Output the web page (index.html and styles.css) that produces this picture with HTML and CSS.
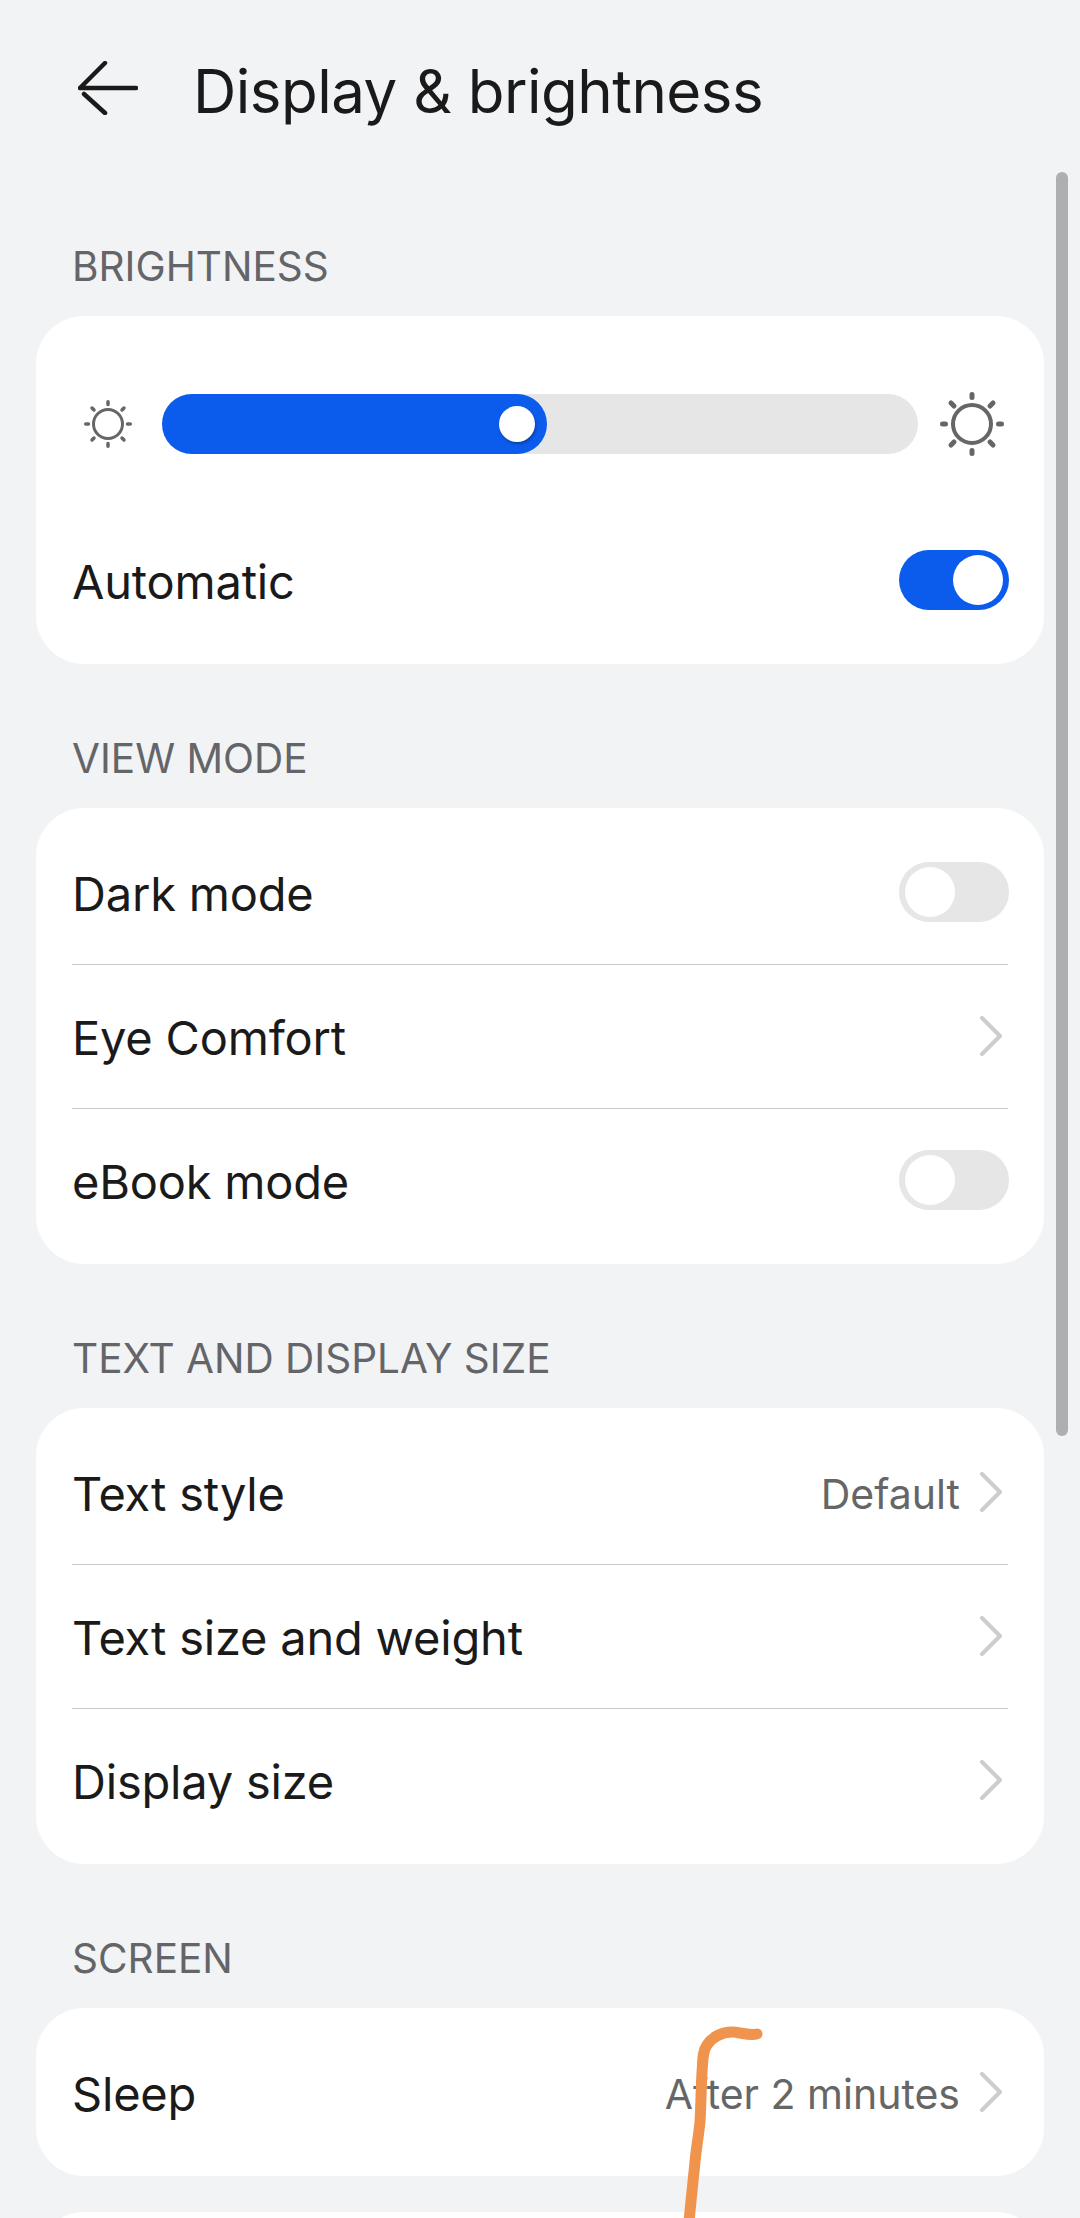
FILE: index.html
```html
<!DOCTYPE html>
<html lang="en">
<head>
    <meta charset="UTF-8">
    <meta name="viewport" content="width=device-width, initial-scale=1.0">
    <title>Display &amp; brightness</title>
    <link rel="stylesheet" href="styles.css">
</head>
<body>
    <header class="top-bar">
        <svg class="back-icon" viewBox="0 0 60 54" width="60" height="54">
            <path d="M2 27H58M27 2 2 27M6 33 27 52"/>
        </svg>
        <h1 class="page-title">Display &amp; brightness</h1>
    </header>

    <h2 class="section-label">BRIGHTNESS</h2>
    <section class="card">
        <div class="slider-row">
            <svg class="sun sun-small" viewBox="0 0 48 48" width="48" height="48">
                <circle cx="24" cy="24" r="14.5"/>
                <path d="M24 1.75V4.5M24 43.5V46.25M1.75 24H4.5M43.5 24H46.25M8 8 10 10M38 38 40 40M40 8 38 10M10 38 8 40"/>
            </svg>
            <div class="slider-track">
                <div class="slider-fill" style="width: 50.9%">
                    <span class="slider-knob"></span>
                </div>
            </div>
            <svg class="sun sun-large" viewBox="0 0 64 64" width="64" height="64">
                <circle cx="32" cy="32" r="19"/>
                <path d="M32 2.5V5.5M32 58.5V61.5M2.5 32H5.5M58.5 32H61.5M11 11 14 14M50 50 53 53M53 11 50 14M14 50 11 53"/>
            </svg>
        </div>
        <div class="row">
            <span class="row-title">Automatic</span>
            <span class="toggle toggle-on"><span class="toggle-knob"></span></span>
        </div>
    </section>

    <h2 class="section-label">VIEW MODE</h2>
    <section class="card">
        <div class="row">
            <span class="row-title">Dark mode</span>
            <span class="toggle"><span class="toggle-knob"></span></span>
        </div>
        <div class="row">
            <span class="row-title">Eye Comfort</span>
            <svg class="chevron" viewBox="0 0 22 40" width="22" height="40"><path d="M2 2 20 20 2 38"/></svg>
        </div>
        <div class="row">
            <span class="row-title">eBook mode</span>
            <span class="toggle"><span class="toggle-knob"></span></span>
        </div>
    </section>

    <h2 class="section-label">TEXT AND DISPLAY SIZE</h2>
    <section class="card">
        <div class="row">
            <span class="row-title">Text style</span>
            <span class="row-value">Default</span>
            <svg class="chevron" viewBox="0 0 22 40" width="22" height="40"><path d="M2 2 20 20 2 38"/></svg>
        </div>
        <div class="row">
            <span class="row-title">Text size and weight</span>
            <svg class="chevron" viewBox="0 0 22 40" width="22" height="40"><path d="M2 2 20 20 2 38"/></svg>
        </div>
        <div class="row">
            <span class="row-title">Display size</span>
            <svg class="chevron" viewBox="0 0 22 40" width="22" height="40"><path d="M2 2 20 20 2 38"/></svg>
        </div>
    </section>

    <h2 class="section-label">SCREEN</h2>
    <section class="card">
        <div class="row">
            <span class="row-title">Sleep</span>
            <span class="row-value">After 2 minutes</span>
            <svg class="chevron" viewBox="0 0 22 40" width="22" height="40"><path d="M2 2 20 20 2 38"/></svg>
        </div>
    </section>
    <section class="card card-next">
        <div class="row"></div>
    </section>

    <div class="scrollbar"></div>

    <!-- trazo a mano encima de la captura -->
    <svg class="scribble" viewBox="0 0 1080 2218" width="1080" height="2218">
        <path d="M757 2034C748 2036 740 2032 732 2032 722 2032 712 2037 707 2045 702 2052 703 2062 702 2072 701 2090 701 2105 700 2122 698 2140 696 2150 695 2162 693 2182 691 2200 689 2222"/>
    </svg>
</body>
</html>
```

FILE: styles.css
```css
html, body {
    margin: 0;
    height: 2218px;
    overflow: hidden;
}

body {
    position: relative;
    background-color: #f2f3f5;
    font-family: Inter, "Noto Sans", sans-serif;
    color: #1a1a1a;
}

/* Barra superior */
.top-bar {
    display: flex;
    align-items: center;
    height: 172px;
    padding: 4px 0 0 78px;
    box-sizing: border-box;
}

.back-icon {
    flex: none;
    margin-right: 55px;
}

.back-icon path {
    fill: none;
    stroke: #1a1a1a;
    stroke-width: 4.5;
    stroke-linecap: round;
    stroke-linejoin: round;
}

.page-title {
    margin: 0;
    padding-top: 6px;
    font-size: 60px;
    font-weight: 420;
    line-height: 72px;
    letter-spacing: -0.5px;
}

/* Etiquetas de seccion */
.section-label {
    display: flex;
    align-items: flex-end;
    height: 144px;
    margin: 0;
    padding: 0 0 25px 72px;
    box-sizing: border-box;
    font-size: 40.5px;
    font-weight: 400;
    line-height: 48px;
    color: #646568;
}

/* Tarjetas */
.card {
    margin: 0 36px;
    padding: 12px 0;
    background-color: #fff;
    border-radius: 48px;
}

.card-next {
    margin-top: 36px;
}

.row {
    display: flex;
    align-items: center;
    height: 144px;
    margin: 0 36px;
}

/* separador sin mover el contenido de la fila */
.row + .row {
    box-shadow: inset 0 1px 0 #c9c9c9;
}

/* la fila bajo el control de brillo no lleva separador */
.slider-row + .row {
    box-shadow: none;
}

.row-title {
    flex: 1;
    padding-top: 4px;
    font-size: 47px;
    line-height: 56px;
    letter-spacing: -0.2px;
}

.row-value {
    padding-top: 4px;
    margin-right: 20px;
    font-size: 41px;
    line-height: 56px;
    color: #666;
}

.chevron {
    flex: none;
    margin-right: 6px;
}

.chevron path {
    fill: none;
    stroke: #cdcdcd;
    stroke-width: 4;
    stroke-linecap: round;
    stroke-linejoin: round;
}

/* Interruptor */
.toggle {
    display: flex;
    flex: none;
    width: 110px;
    height: 60px;
    margin-right: -1px;
    padding: 5px 6px;
    box-sizing: border-box;
    background-color: #e6e6e6;
    border-radius: 30px;
}

.toggle-on {
    justify-content: flex-end;
    background-color: #0b5ced;
}

.toggle-knob {
    width: 50px;
    height: 50px;
    background-color: #fff;
    border-radius: 50%;
}

/* Brillo */
.slider-row {
    display: flex;
    align-items: center;
    height: 60px;
    padding: 66px 40px 54px 48px;
}

.sun {
    flex: none;
}

.sun-small {
    margin-right: 30px;
}

.sun-large {
    margin-left: 22px;
}

.sun circle, .sun path {
    fill: none;
    stroke: #666;
    stroke-linecap: round;
}

.sun-small circle {
    stroke-width: 3;
}

.sun-small path {
    stroke-width: 3.5;
}

.sun-large circle {
    stroke-width: 4;
}

.sun-large path {
    stroke-width: 5;
}

.slider-track {
    flex: 1;
    height: 60px;
    background-color: #e6e6e6;
    border-radius: 30px;
}

.slider-fill {
    display: flex;
    align-items: center;
    justify-content: flex-end;
    height: 100%;
    padding-right: 12px;
    box-sizing: border-box;
    background-color: #0b5ced;
    border-radius: 30px;
}

.slider-knob {
    width: 36px;
    height: 36px;
    background-color: #fff;
    border-radius: 50%;
    box-shadow: 1px 2px 3px rgba(0, 0, 0, 0.3);
}

/* Encima del contenido */
.scrollbar {
    position: absolute;
    top: 172px;
    left: 1056px;
    width: 12px;
    height: 1264px;
    background-color: #aeafb1;
    border-radius: 6px;
}

.scribble {
    position: absolute;
    top: 0;
    left: 0;
    pointer-events: none;
}

.scribble path {
    fill: none;
    stroke: #f0944d;
    stroke-width: 11;
    stroke-linecap: round;
    stroke-linejoin: round;
}
```
